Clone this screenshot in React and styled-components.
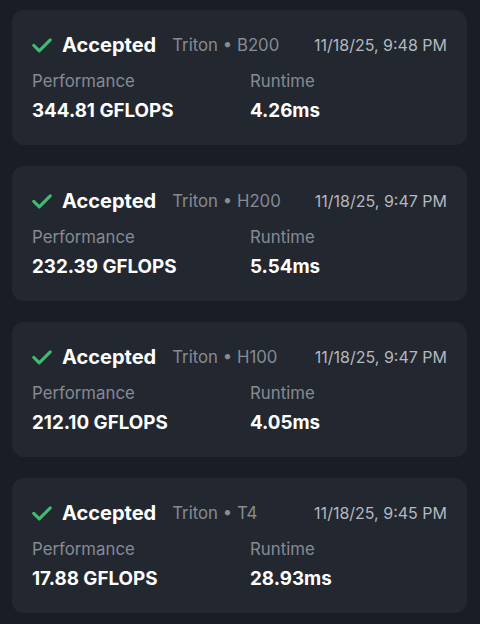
import styled, { createGlobalStyle } from "styled-components";

const GlobalStyle = createGlobalStyle`
  * { box-sizing: border-box; }
  body {
    margin: 0;
    background: #1a1d26;
    font-family: Inter, "Noto Sans", sans-serif;
  }
`;

const List = styled.div`
  display: flex;
  flex-direction: column;
  gap: 21px;
  padding: 10px 13px 10px 12px;
`;

const Card = styled.div`
  background: #232730;
  border-radius: 12px;
  padding: 22px 20px 24px;
  height: 135px;
`;

const Header = styled.div`
  display: flex;
  align-items: center;
  height: 26px;
`;

const Check = styled.svg`
  width: 22px;
  height: 22px;
  margin-left: -1px;
  margin-right: 9px;
  flex-shrink: 0;
`;

const Status = styled.span`
  color: #ffffff;
  font-size: 20px;
  font-weight: 700;
  margin-right: 16px;
`;

const Meta = styled.span`
  color: #868b94;
  font-size: 16.8px;
`;

const Time = styled.span`
  margin-left: auto;
  color: #b4b8bf;
  font-size: 16px;
`;

const Stats = styled.div`
  display: grid;
  grid-template-columns: 218px 1fr;
  margin-top: 12px;
`;

const Label = styled.div`
  color: #868b94;
  font-size: 16.8px;
  line-height: 23px;
`;

const Value = styled.div`
  color: #ffffff;
  font-size: 18.8px;
  font-weight: 700;
  line-height: 24px;
  margin-top: 6px;
`;

const submissions = [
  { gpu: "B200", time: "11/18/25, 9:48 PM", perf: "344.81 GFLOPS", runtime: "4.26ms" },
  { gpu: "H200", time: "11/18/25, 9:47 PM", perf: "232.39 GFLOPS", runtime: "5.54ms" },
  { gpu: "H100", time: "11/18/25, 9:47 PM", perf: "212.10 GFLOPS", runtime: "4.05ms" },
  { gpu: "T4", time: "11/18/25, 9:45 PM", perf: "17.88 GFLOPS", runtime: "28.93ms" },
];

const App = () => (
  <>
    <GlobalStyle />
    <List>
      {submissions.map((s) => (
        <Card key={s.gpu}>
          <Header>
            <Check viewBox="0 0 24 24" fill="none" stroke="#3fbd6e" strokeWidth="3.4" strokeLinecap="round" strokeLinejoin="round">
              <path d="M3 12.5l6 6L21 6.5" />
            </Check>
            <Status>Accepted</Status>
            <Meta>Triton • {s.gpu}</Meta>
            <Time>{s.time}</Time>
          </Header>
          <Stats>
            <div>
              <Label>Performance</Label>
              <Value>{s.perf}</Value>
            </div>
            <div>
              <Label>Runtime</Label>
              <Value>{s.runtime}</Value>
            </div>
          </Stats>
        </Card>
      ))}
    </List>
  </>
);

export default App;
